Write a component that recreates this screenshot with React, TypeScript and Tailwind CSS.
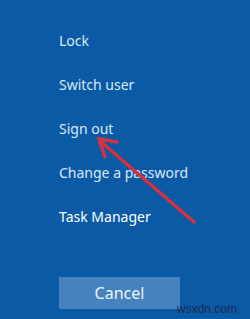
export default function App() {
  const items = ["Lock", "Switch user", "Sign out", "Change a password", "Task Manager"];

  return (
    <div className="relative w-[250px] h-[319px] overflow-hidden bg-[#0a5aa6] font-['Noto_Sans',sans-serif]">
      <div className="flex flex-col pl-[59px] pt-[31px]">
        {items.map((label, i) => (
          <div
            key={label}
            className={`h-[44px] text-[14px] leading-[20px] ${
              i === items.length - 1 ? "text-white" : "text-[#dce8f4]"
            }`}
          >
            {label}
          </div>
        ))}
        <button className="mt-[26px] w-[121px] h-[32px] bg-[#4682bf] text-[#eef4fa] text-[16px] leading-[20px]">
          Cancel
        </button>
      </div>

      {/* red arrow pointing at "Sign out" */}
      <svg className="absolute left-0 top-0 pointer-events-none" width="250" height="319">
        <g stroke="#d8323e" strokeWidth="3.5" strokeLinecap="round" fill="none">
          <line x1="194" y1="222" x2="100" y2="141" />
          <polyline points="117,142 99,139 105,157" strokeLinejoin="miter" />
        </g>
      </svg>

      <div className="absolute left-[177px] top-[302px] text-[12px] leading-[14px] text-[#1c2b4f] font-['Liberation_Sans',sans-serif]">
        wsxdn.com
      </div>
    </div>
  );
}
